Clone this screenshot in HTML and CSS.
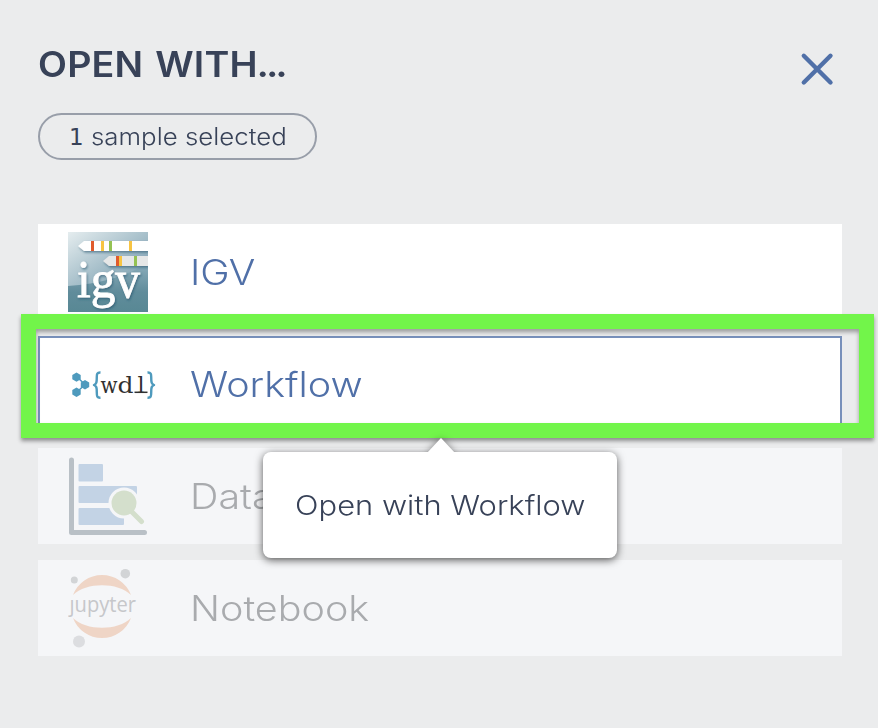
FILE: index.html
```html
<!DOCTYPE html>
<html lang="en">
<head>
<meta charset="utf-8">
<title>Open with</title>
<link rel="stylesheet" href="styles.css">
</head>
<body>
<main class="panel">
  <header class="head">
    <h1 class="title">OPEN WITH<span class="dots">...</span></h1>
    <svg class="close" width="34" height="34" viewBox="0 0 34 34"><path d="M3.800 3.800 30.500 30.500M30.500 3.800 3.800 30.500" stroke="#5070a8" stroke-width="4.400" stroke-linecap="round"/></svg>
  </header>
  <div class="pill"><span class="digit">1</span><span class="pill-text">sample selected</span></div>
  <section class="list">
    <div class="row">
      <svg class="icon" width="80" height="80" viewBox="0 0 80 80">
        <defs>
          <linearGradient id="sky" x1="0" y1="0" x2=".7" y2="1"><stop offset="0" stop-color="#e5edef"/><stop offset=".55" stop-color="#9eb9c5"/><stop offset="1" stop-color="#6f98a8"/></linearGradient>
          <linearGradient id="sea" x1="0" y1="0" x2="0" y2="1"><stop offset="0" stop-color="#8dafbd"/><stop offset=".6" stop-color="#608c9b"/><stop offset="1" stop-color="#588894"/></linearGradient>
          <filter id="soft" x="-20%" y="-20%" width="140%" height="150%"><feDropShadow dx="1" dy="1.500" stdDeviation="1.300" flood-color="#234d68" flood-opacity=".6"/></filter>
        </defs>
        <path d="M0 0h80v80H0z" fill="url(#sky)"/>
        <path d="M0 54C30 52 62 44 80 30V80H0z" fill="url(#sea)"/>
        <g filter="url(#soft)">
          <path d="M10 14 16 9H80V19H16z" fill="#fff"/>
          <path d="M35 29 41 24H80V34H41z" fill="#e6e7e7"/>
        </g>
        <path d="M23 9h3v10h-3zM48 24h3v10h-3z" fill="#e05b2c"/>
        <path d="M33 9h3v10h-3zM61 9h3v10h-3zM51 24h3v10h-3z" fill="#f7c443"/>
        <path d="M41 9h3v10h-3zM66 24h3v10h-3z" fill="#95c253"/>
        <text class="igv" x="9" y="65" textLength="63" lengthAdjust="spacingAndGlyphs" filter="url(#soft)">igv</text>
      </svg>
      <span class="label">IGV</span>
    </div>
    <div class="row active">
      <svg class="icon wide" width="90" height="80" viewBox="0 0 90 80">
        <path d="M9 33 17 40.500 9 48" fill="none" stroke="#4e9abd" stroke-width="1.500"/>
        <g fill="#4e9abd"><path d="M4.300 31 8.500 28.500l4.200 2.500v4.300L8.500 37.800l-4.200-2.500zM12.800 38.500 17 36l4.200 2.500v4.600L17 45.500l-4.200-2.400zM4.300 46.100 8.500 43.500l4.200 2.600v4.300L8.500 52.900l-4.200-2.500z"/></g>
        <g fill="none" stroke="#4e9abd" stroke-width="2.400" stroke-linejoin="round"><path d="M32.500 28.500C29 28.300 28.800 30 28.800 33C28.800 38.500 28.500 40 26 41C28.500 42 28.800 43.500 28.800 48.500C28.800 52.500 29 53.900 32.500 53.700"/><path d="M79.500 28.500C83 28.300 83.200 30 83.200 33C83.200 38.500 83.500 40 86 41C83.500 42 83.200 43.500 83.200 48.500C83.200 52.500 83 53.900 79.500 53.700"/></g>
        <g class="wdl"><text x="32.500" y="49" textLength="17" lengthAdjust="spacingAndGlyphs">w</text><text x="49.500" y="49" textLength="16" lengthAdjust="spacingAndGlyphs">d</text><text x="69.500" y="49">l</text></g>
        <path d="M66.500 48.300H79.500" stroke="#303030" stroke-width="1.500"/>
      </svg>
      <span class="label">Workflow</span>
      <div class="tooltip"><svg class="arrow" width="30" height="16" viewBox="0 0 30 16"><path d="M0 16 15 0 30 16z" fill="#fff"/></svg><span class="tip-text">Open with Workflow</span></div>
    </div>
    <div class="row disabled">
      <svg class="icon" width="80" height="80" viewBox="0 0 80 80">
        <path d="M3.500 4V76.500H76.500" fill="none" stroke="#b9c0c6" stroke-width="5" stroke-linecap="round" stroke-linejoin="round"/>
        <g fill="#c3d3e5"><rect x="10.500" y="8" width="24.500" height="17.500" rx="1"/><rect x="10.500" y="30" width="58.500" height="17" rx="1"/><rect x="10.500" y="52" width="45.500" height="17" rx="1"/></g>
        <circle cx="56" cy="47" r="15.500" fill="#f5f6f8"/><circle cx="56" cy="47" r="12.500" fill="#d4dfcc"/>
        <path d="M63 55 73.500 65.500" stroke="#d4dfcc" stroke-width="5" stroke-linecap="round"/>
      </svg>
      <span class="label">Data</span>
    </div>
    <div class="row disabled">
      <svg class="icon" width="80" height="80" viewBox="0 0 80 80">
        <path d="M5 27A31 31 0 0 1 63 27C50 14 18 14 5 27zM5 50A31 31 0 0 0 63 50C50 63 18 63 5 50z" fill="#efd5c6"/>
        <g fill="#d2d4d6"><circle cx="57.300" cy="5.700" r="4.800"/><circle cx="6.300" cy="12" r="3.500"/><circle cx="11" cy="73.500" r="6" fill="#dcdde0"/></g>
        <text class="jupyter" x="1.500" y="44" textLength="66.500" lengthAdjust="spacingAndGlyphs">ȷupyter</text>
      </svg>
      <span class="label">Notebook</span>
    </div>
    <div class="highlight"></div>
  </section>
</main>
</body>
</html>
```
FILE: styles.css
```css
* { box-sizing: border-box; }
body { margin: 0; background: #ebeced; color: #384258; font-family: Inter, "Open Sans", sans-serif; overflow: hidden; }
.panel { height: 728px; padding: 44px 36px 0 38px; }
.head { display: flex; justify-content: space-between; height: 69px; padding-right: 8px; }
.title { margin: 0; font-size: 35px; line-height: 41px; font-weight: 600; letter-spacing: .2px; word-spacing: 2px; white-space: nowrap; transform: scaleX(1.075); transform-origin: left; }
.dots { letter-spacing: -2.4px; margin-left: -1px; }
.close { margin-top: 8px; }
.pill { width: 279px; height: 47px; border: 2px solid #989ea9; border-radius: 24px; display: flex; align-items: center; padding-left: 29px; font-size: 23.5px; white-space: nowrap; }
.pill-text { font-weight: 350; transform: scaleX(1.1); transform-origin: left; }
.digit { width: 22px; font-family: "DejaVu Sans", sans-serif; font-size: 23px; }
.list { position: relative; width: 804px; margin-top: 64px; display: grid; gap: 16px; }
.row { height: 96px; background: #fff; display: flex; align-items: center; padding-left: 30px; gap: 42px; color: #5070a8; }
.active { position: relative; border: 2px solid #7890ba; padding-left: 28px; }
.disabled { background: #f5f6f8; color: #a9abae; }
.icon { flex: none; }
.wide { margin-right: -10px; }
.label { font-size: 35px; font-weight: 300; line-height: 44px; white-space: nowrap; transform: scaleX(1.128); transform-origin: left; }
.highlight { position: absolute; left: -17px; top: 90px; width: 853px; height: 124px; border: 15px solid #72f54a; box-shadow: 0 3px 4px rgba(0,0,0,.4), inset 0 3px 4px rgba(0,0,0,.35); }
.tooltip { position: absolute; z-index: 3; left: 223px; top: 114px; width: 354px; height: 106px; border-radius: 8px; background: #fff; color: #384258; filter: drop-shadow(0 2px 4px rgba(0,0,0,.65)); display: flex; align-items: center; justify-content: center; }
.arrow { position: absolute; left: 163px; top: -14px; }
.tip-text { font-size: 27.5px; font-weight: 300; white-space: nowrap; transform: scaleX(1.123); }
.igv { font: 52px "Liberation Serif", serif; fill: #fff; stroke: #fff; stroke-width: .8; }
.wdl { font: 22px "DejaVu Serif", serif; fill: #303030; }
.jupyter { font: 21px "Open Sans", sans-serif; fill: #c6c7ca; }
```
